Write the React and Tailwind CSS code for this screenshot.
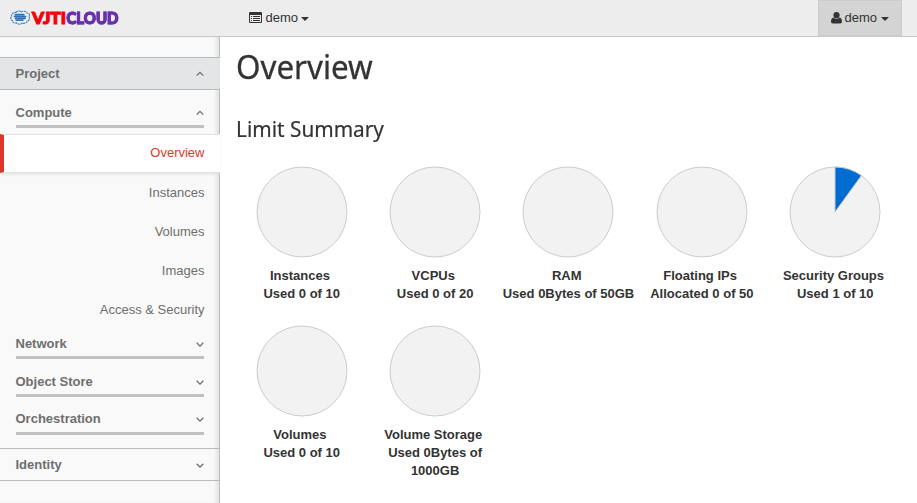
import React from 'react';

const SANS = "font-['Liberation_Sans',Arial,sans-serif]";

function Chevron({ up }) {
  return (
    <svg width="8" height="6" viewBox="0 0 8 6" className="shrink-0">
      <path
        d={up ? 'M0.7 4.6 L4 1.3 L7.3 4.6' : 'M0.7 1.8 L4 5.1 L7.3 1.8'}
        fill="none"
        stroke="#6e6e6e"
        strokeWidth="1.3"
      />
    </svg>
  );
}

function Caret() {
  return <span className="mt-[3px] h-0 w-0 border-x-4 border-t-4 border-x-transparent border-t-[#333]" />;
}

function Logo() {
  return (
    <svg width="112" height="26" viewBox="0 -5 112 26" className="block overflow-visible">
      <path
        d="M6 3.4 C7.5 1.6 10.5 1.8 11.5 2.9 C13.5 1.5 16.2 2.3 17 4 C19.4 4.4 20 6.3 19.1 7.6 C20.2 9.5 19 11.8 17.2 12.2 C16.4 14.3 13.8 14.8 12.3 14 C10.5 15.9 7.6 15.4 6.6 13.9 C4.2 14.5 2.4 13.5 2.5 11.5 C0.4 10.7 0.2 8.5 1.7 7.4 C0.9 5.1 3.2 3.1 6 3.4 Z"
        fill="#eef3f8"
        stroke="#3b78b5"
        strokeWidth="1.1"
        strokeDasharray="2.2 0.6"
      />
      <path d="M4.5 5.6h10M3.8 7.5h12.5M4.8 9.4h11M5.5 11.3h8" stroke="#2c71b4" strokeWidth="1.6" />
      <g fontFamily="Lato, sans-serif" fontWeight="900" fontSize="17">
        <text x="22" y="14.5" textLength="34" lengthAdjust="spacingAndGlyphs" fill="#f5000c" stroke="#f5000c" strokeWidth="1.1">
          VJTI
        </text>
        <text
          x="56.5"
          y="14.5"
          textLength="52"
          lengthAdjust="spacingAndGlyphs"
          fill="#702fa8"
          stroke="#702fa8"
          strokeWidth="1.1"
          className="[filter:drop-shadow(0.7px_0.6px_0_#4776e0)]"
        >
          CLOUD
        </text>
      </g>
    </svg>
  );
}

function Header() {
  return (
    <header className="flex h-[37px] border-b border-[#c8c8c8] bg-[#ededed] text-[13px] leading-[18px] text-[#333]">
      <div className="w-[249px] pl-[10px] pt-1">
        <Logo />
      </div>
      <div className="flex h-[35px] items-center">
        <svg width="13" height="11" viewBox="0 0 13 11" className="mr-[3.5px]">
          <path d="M1 0h11a1 1 0 0 1 1 1v9a1 1 0 0 1-1 1H1a1 1 0 0 1-1-1V1a1 1 0 0 1 1-1Z" fill="#333" />
          <path d="M1 3h11v7H1Z" fill="#eee" />
          <path d="M2 4.5h1M4 4.5h7M2 6.5h1M4 6.5h7M2 8.5h1M4 8.5h7" stroke="#333" />
        </svg>
        <span className="mr-[3px]">demo</span>
        <Caret />
      </div>
      <div className="ml-auto mr-[15px] flex h-[36px] w-[84px] items-center border border-[#cbcbcb] bg-[#d4d4d4] pb-px pl-3">
        <svg width="11" height="12" viewBox="0 0 10 12" preserveAspectRatio="none" className="mr-[2.5px]" fill="#333">
          <ellipse cx="5" cy="3.2" rx="2.8" ry="3.1" />
          <path d="M2.3 5.4 C3.6 7.2 6.4 7.2 7.7 5.4 C9.4 5.6 10 7.6 10 9.6 C10 10.8 9.3 11.5 8.2 11.5 H1.8 C0.7 11.5 0 10.8 0 9.6 C0 7.6 0.6 5.6 2.3 5.4 Z" />
        </svg>
        <span className="mr-[3.5px]">demo</span>
        <Caret />
      </div>
    </header>
  );
}

function Group({ label, up, className }) {
  return (
    <div className={`ml-4 mr-[15px] flex justify-between border-b-[3px] border-[#c0c0c0] ${className}`}>
      <span className="-ml-[0.5px] pt-px font-bold leading-[18px]">{label}</span>
      <span className="flex h-5 items-center">
        <Chevron up={up} />
      </span>
    </div>
  );
}

function Sidebar() {
  return (
    <nav className="relative h-[466px] w-[220px] shrink-0 border-r border-[#bdbdbd] bg-[#f9f9f9] pt-5 text-[13px] text-[#6e6e6e] shadow-[inset_-4px_0_4px_-2px_#dcdcdc]">
      <div className="-mr-px flex h-[33px] items-center justify-between border-y border-[#b6babb] bg-[#e3e5e6] pl-[15.5px] pr-4 font-bold">
        Project
        <Chevron up />
      </div>
      <Group label="Compute" up className="mt-[13px] h-[25px]" />
      <div className="-mr-px mt-[6px] flex h-[39px] items-center justify-end border-y border-l-4 border-y-[#e2e2e2] border-l-[#dd3726] bg-white pb-px pr-[15.5px] text-[#dd3726] shadow-[0_2px_3px_-1px_#dddddd]">
        Overview
      </div>
      {['Instances', 'Volumes', 'Images', 'Access & Security'].map((t) => (
        <div key={t} className="flex h-[39px] items-center justify-end pr-[14.5px]">
          {t}
        </div>
      ))}
      <Group label="Network" className="mt-[5px] h-[25px]" />
      <Group label="Object Store" className="mt-[13px] h-[25px]" />
      <Group label="Orchestration" className="mt-[12px] h-[26px]" />
      <div className="-mr-px mt-[13px] flex h-[33px] items-center justify-between border-y border-[#b6babb] pl-[15.5px] pr-4 font-bold">
        Identity
        <Chevron />
      </div>
    </nav>
  );
}

const quotas = [
  ['Instances', 'Used 0 of 10', 0],
  ['VCPUs', 'Used 0 of 20', 0],
  ['RAM', 'Used 0Bytes of 50GB', 0],
  ['Floating IPs', 'Allocated 0 of 50', 0],
  ['Security Groups', 'Used 1 of 10', 1],
  ['Volumes', 'Used 0 of 10', 0],
  ['Volume Storage', 'Used 0Bytes of 1000GB', 0],
];

function Quota({ title, usage, used }) {
  return (
    <div className="flex h-[159px] flex-col items-center text-center text-[13px] font-bold leading-[18px] text-[#333]">
      <svg width="92" height="92" viewBox="0 0 92 92" className="mb-[9px] shrink-0">
        <circle cx="46" cy="46" r="45" fill="#f2f2f2" stroke="#ccc" />
        {used > 0 && <path d="M46 46V1A45 45 0 0 1 72.45 9.6Z" fill="#006ccf" stroke="#ccc" />}
      </svg>
      <div>{title}&nbsp;</div>
      <div>{usage}</div>
    </div>
  );
}

export default function App() {
  return (
    <div className={`h-[503px] w-[917px] overflow-hidden bg-white ${SANS}`}>
      <Header />
      <div className="flex">
        <Sidebar />
        <main className="pl-[15px] text-[#333]">
          <h1 className="ml-[0.5px] mt-[9px] h-[42px] w-[142px] origin-left scale-x-[0.95] whitespace-nowrap font-['Noto_Sans',sans-serif] text-[33px] leading-[42px] [-webkit-text-stroke:0.3px_#333]">
            Overview
          </h1>
          <h2 className="ml-[0.5px] mt-[25px] h-[30px] w-[157px] origin-left scale-x-[0.945] whitespace-nowrap font-['Noto_Sans',sans-serif] text-[22px] leading-[30px] [-webkit-text-stroke:0.2px_#333]">
            Limit Summary
          </h2>
          <div className="mt-[23px] grid w-[667px] grid-cols-5">
            {quotas.map(([title, usage, used]) => (
              <Quota key={title} title={title} usage={usage} used={used} />
            ))}
          </div>
        </main>
      </div>
    </div>
  );
}
